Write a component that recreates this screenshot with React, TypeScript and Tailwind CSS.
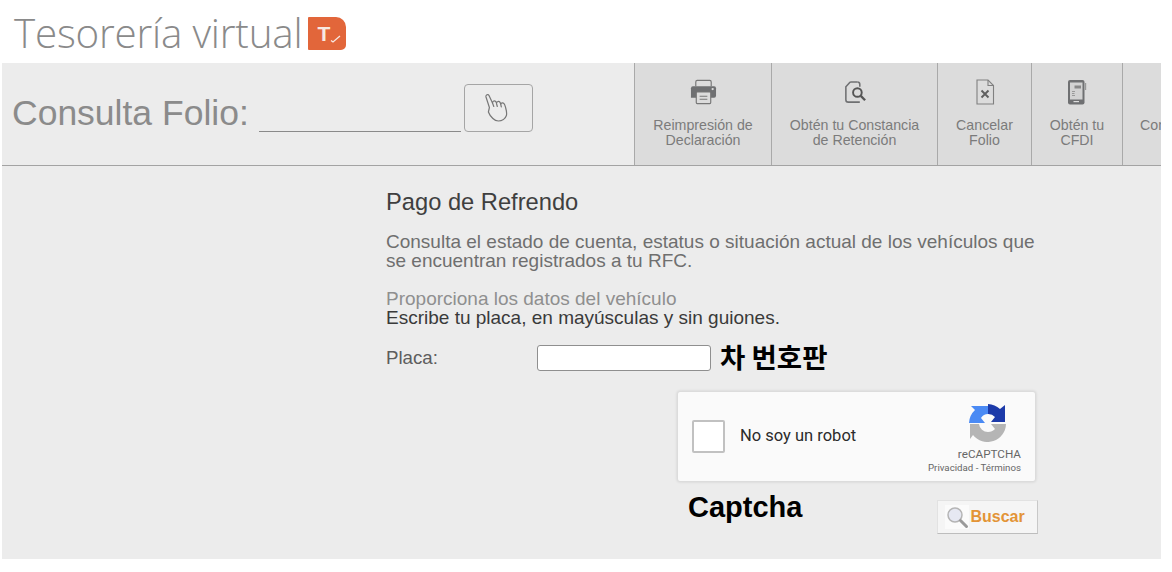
import type { ReactNode } from 'react';

const sans = 'font-["Liberation_Sans",Arial,sans-serif]';

function PrinterIcon() {
  return (
    <svg width="27" height="26" viewBox="0 0 28 26">
      <path d="M6 7V2.500A1.500 1.500 0 0 1 7.500 1h13A1.500 1.500 0 0 1 22 2.500V7" fill="none" stroke="#777" strokeWidth="1.200" />
      <path d="M3 7h22a2 2 0 0 1 2 2v8a2 2 0 0 1-2 2H1V9a2 2 0 0 1 2-2z" fill="#6f7072" />
      <circle cx="23.500" cy="10" r="1.200" fill="#dcdcdc" />
      <rect x="6.500" y="13" width="15" height="12" rx="1" fill="#dcdcdc" stroke="#777" strokeWidth="1.200" />
      <path d="M10 17.500h8M10 20.500h8" stroke="#777" strokeWidth="1.100" />
    </svg>
  );
}

function ConstanciaIcon() {
  return (
    <svg width="24" height="25" viewBox="0 0 24 26" fill="none">
      <path d="M7 2h7.500M7 2 2.500 7v13.500A2.500 2.500 0 0 0 5 23h12" stroke="#6f7072" strokeWidth="1.600" />
      <path d="M14.500 2A2.500 2.500 0 0 1 17 4.500V7" stroke="#6f7072" strokeWidth="1.600" />
      <circle cx="14.500" cy="13" r="4.500" stroke="#555" strokeWidth="2" />
      <path d="m18 16.500 4.500 4.500" stroke="#555" strokeWidth="2.400" />
    </svg>
  );
}

function CancelIcon() {
  return (
    <svg width="20" height="26" viewBox="0 0 20 26" fill="none">
      <path d="M2 1h11l5.500 5.500V25H2z" stroke="#808080" strokeWidth="1.100" />
      <path d="M13 1v5.500h5.500" stroke="#808080" strokeWidth="1.100" />
      <path d="m6.500 11.500 7 7m0-7-7 7" stroke="#5f5f5f" strokeWidth="1.900" />
    </svg>
  );
}

function PhoneIcon() {
  return (
    <svg width="20" height="26" viewBox="0 0 20 26">
      <rect x="1" y="1" width="16.500" height="24.500" rx="2" fill="#6f7072" />
      <rect x="18" y="4" width="1.200" height="7" fill="#999" />
      <rect x="3" y="3.500" width="12.500" height="17" fill="#d2d2d2" />
      <path d="M7.500 6.500h6.500v3H7.500z" fill="#888" />
      <path d="M5 12.500h3M5 14.500h2.500M5 16.500h3" stroke="#999" strokeWidth="1" />
      <rect x="6.500" y="22" width="5.500" height="1.200" fill="#ddd" />
    </svg>
  );
}

function HandIcon() {
  return (
    <svg width="26" height="31" viewBox="0 0 26 31" fill="none" stroke="#777" strokeWidth="1.200" strokeLinejoin="round" strokeLinecap="round">
      <path d="M1 4C.5 2 3 .5 4 2.500l3.500 7.500c.2-2 2-2.700 3.200-1.500.4.400.6 1 .8 1.700.3-1.800 2.400-2.300 3.400-1 .4.500.6 1.100.8 1.800.5-1.400 2.400-1.500 3.300-.4 1 1.200 1.200 2.500 1.700 4.400.8 2.800 1.400 5 .7 7.500-1 3.300-4.500 5.500-8 5.500-2.300 0-4-1-5.500-2.500-2-2-3.500-3.500-4.500-6.500l1-4.500z" />
      <path d="M7.500 10l1.300 3.500M11.500 10.500l.8 3M15.700 11l.6 2.800" />
    </svg>
  );
}

function RecaptchaIcon() {
  return (
    <svg width="38" height="38" viewBox="0 0 38 38">
      <path d="M0 19A19 19 0 0 1 6 6L2 2H19V10A9 9 0 0 0 12 14L16 19Z" fill="#4a8af4" />
      <path d="M19 0A19 19 0 0 1 31 5L36 1V18H22L26 13A9 9 0 0 0 19 10Z" fill="#1c3aa9" />
      <path d="M0 20H10A9 9 0 0 0 19 28C22 28 24 27 26 25L22 20H37A18.500 18.500 0 0 1 4 31L1 35V20Z" fill="#b5b5b5" />
    </svg>
  );
}

function SearchIcon() {
  return (
    <svg width="24" height="24" viewBox="0 0 24 24" className="bg-[#fbfbfb]">
      <circle cx="10" cy="10" r="7" fill="#e6e8f2" stroke="#b4b4b4" strokeWidth="1.500" />
      <path d="m15.500 15.500 6 6" stroke="#9a9a9a" strokeWidth="3" strokeLinecap="round" />
    </svg>
  );
}

function Tab({ icon, width, children }: { icon: ReactNode; width: string; children: ReactNode }) {
  return (
    <div className={`flex h-full shrink-0 flex-col items-center border-l border-[#a9a9a9] bg-[#dcdcdc] pt-[12px] ${width}`}>
      <div className="flex h-[30px] items-end justify-center">{icon}</div>
      <p className="mt-[13px] text-center text-[14.2px] leading-[15px] text-[#7b7b7b]">{children}</p>
    </div>
  );
}

export default function App() {
  return (
    <div className={`h-[572px] w-[1172px] overflow-hidden bg-white ${sans}`}>
      <div className="flex h-[63px] items-center pl-[14px] pt-[4px]">
        <span className='font-["Open_Sans",sans-serif] text-[40.4px] leading-none font-light tracking-[-0.2px] text-[#8a8a8a]'>
          Tesorería virtual
        </span>
        <div className="relative ml-[6px] flex h-[33px] w-[38px] items-center justify-center rounded-tl-[1px] rounded-tr-[10px] rounded-br-[5px] rounded-bl-[1px] bg-[#e2663a]">
          <span className="mr-[7px] text-[21px] leading-none font-bold text-[#f7e9e2]">T</span>
          <svg className="absolute right-[5px] bottom-[7px]" width="11" height="8" viewBox="0 0 11 8" fill="none">
            <path d="m1 5.500 2 1.500L10 1" stroke="#f7e9e2" strokeWidth="1.300" />
          </svg>
        </div>
      </div>

      <div className="ml-[2px] h-[496px] w-[1159px] bg-[#ececec]">
        <div className="flex h-[103px] items-start justify-between border-b border-[#a3a3a3]">
          <div className="flex items-start pt-[21px] pl-[10px]">
            <span className="mt-[7px] text-[35.5px] leading-[44px] text-[#8b8b8b]">Consulta Folio:</span>
            <div className="mt-[47px] ml-[10px] h-px w-[202px] bg-[#8a8a8a]" />
            <button className="ml-[3px] flex h-[48px] w-[69px] items-center justify-center rounded-[4px] border border-[#a5a5a5]">
              <HandIcon />
            </button>
          </div>
          <div className="flex h-full w-[527px] overflow-hidden">
            <Tab icon={<PrinterIcon />} width="w-[137px]">Reimpresión de<br />Declaración</Tab>
            <Tab icon={<ConstanciaIcon />} width="w-[166px]">Obtén tu Constancia<br />de Retención</Tab>
            <Tab icon={<CancelIcon />} width="w-[94px]">Cancelar<br />Folio</Tab>
            <Tab icon={<PhoneIcon />} width="w-[91px]">Obtén tu<br />CFDI</Tab>
            <Tab icon={null} width="w-[91px]"><span className="block whitespace-nowrap">Consulta</span></Tab>
          </div>
        </div>

        <div className="ml-[384px] w-[654px] pt-[24px]">
          <h1 className="text-[23.7px] leading-[25px] text-[#3f3f3f]">Pago de Refrendo</h1>
          <p className="mt-[17px] text-[19px] leading-[19px] text-[#6f6f6f]">
            Consulta el estado de cuenta, estatus o situación actual de los vehículos que se encuentran registrados a tu RFC.
          </p>
          <p className="mt-[19px] text-[19px] leading-[19px] text-[#8f8f8f]">Proporciona los datos del vehículo</p>
          <p className="text-[19px] leading-[19px] text-[#3a3a3a]">Escribe tu placa, en mayúsculas y sin guiones.</p>

          <div className="mt-[17px] flex items-center">
            <label className="w-[151px] text-[18.7px] leading-[24px] text-[#5d5d5d]">Placa:</label>
            <input className="h-[26px] w-[174px] rounded-[3px] border border-[#8f8f8f] bg-white" />
            <span className='mb-[4px] ml-[9px] font-["Noto_Sans_CJK_KR",sans-serif] text-[27.5px] leading-[24px] font-bold text-black'>차 번호판</span>
          </div>

          <div className="mt-[19px] ml-[291px] flex h-[91px] w-[359px] items-center rounded-[3px] border border-[#dcdcdc] bg-[#fafafa] pr-[14px] pl-[14px] shadow-[0_0_3px_rgba(0,0,0,0.12)]">
            <div className="h-[33px] w-[33px] rounded-[2px] border-2 border-[#c1c1c1] bg-white" />
            <span className='ml-[15px] font-["Roboto",sans-serif] text-[16.5px] text-[#2b2b2b]'>No soy un robot</span>
            <div className="ml-auto flex flex-col items-end pt-[4px]">
              <div className="mr-[14px]">
                <RecaptchaIcon />
              </div>
              <span className='mt-[5px] font-["Roboto",sans-serif] text-[11.7px] leading-[14px] text-[#666]'>reCAPTCHA</span>
              <span className='font-["Roboto",sans-serif] text-[9.7px] leading-[13px] whitespace-nowrap text-[#666]'>Privacidad - Términos</span>
            </div>
          </div>

          <div className="mt-[8px] flex items-start">
            <span className="mt-[1px] ml-[302px] text-[29px] leading-[32px] font-bold text-black">Captcha</span>
            <button className="mt-[10px] ml-[135px] flex h-[34px] w-[101px] items-center gap-[1px] border border-[#e2e2e2] border-r-[#c8c8c8] border-b-[#bdbdbd] bg-[#f5f5f5] pl-[7px]">
              <SearchIcon />
              <span className="text-[16px] font-bold text-[#e39437]">Buscar</span>
            </button>
          </div>
        </div>
      </div>
    </div>
  );
}
